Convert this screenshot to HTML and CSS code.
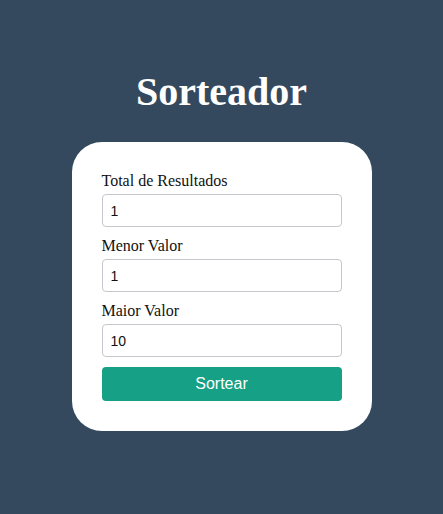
FILE: index.html
```html
<!DOCTYPE html>
<html lang="pt">
<head>
<meta charset="utf-8">
<title>Sorteador</title>
<link rel="stylesheet" href="styles.css">
</head>
<body>
<main class="page">
  <h1 class="title">Sorteador</h1>
  <form class="card">
    <label class="label" for="total">Total de Resultados</label>
    <input class="field" id="total" type="number" value="1">
    <label class="label" for="min">Menor Valor</label>
    <input class="field" id="min" type="number" value="1">
    <label class="label" for="max">Maior Valor</label>
    <input class="field" id="max" type="number" value="10">
    <button class="btn" type="button">Sortear</button>
  </form>
</main>
</body>
</html>
```
FILE: styles.css
```css
html, body {
  margin: 0;
  height: 100%;
}
body {
  background: #34495e;
  font-family: "Liberation Serif", "Times New Roman", serif;
}
.page {
  display: flex;
  flex-direction: column;
  align-items: center;
  padding-top: 69px;
}
.title {
  margin: 0 0 28px;
  font-size: 40px;
  font-weight: bold;
  color: #fff;
  line-height: 45px;
}
.card {
  box-sizing: border-box;
  width: 300px;
  background: #fff;
  border-radius: 30px;
  padding: 30px 30px 30px;
  display: flex;
  flex-direction: column;
}
.label {
  display: block;
  font-size: 16px;
  line-height: 18px;
  color: #111;
  margin-bottom: 4px;
}
.field {
  box-sizing: border-box;
  width: 100%;
  height: 33px;
  margin: 0 0 10px;
  padding: 0 8px;
  border: 1px solid #c4c8cc;
  border-radius: 4px;
  font-family: "Liberation Sans", Arial, sans-serif;
  font-size: 14px;
  color: #111;
  -moz-appearance: textfield;
}
.field::-webkit-inner-spin-button,
.field::-webkit-outer-spin-button {
  -webkit-appearance: none;
  margin: 0;
}
.btn {
  box-sizing: border-box;
  width: 100%;
  height: 34px;
  border: none;
  border-radius: 4px;
  background: #16a085;
  color: #fff;
  font-family: "Liberation Sans", Arial, sans-serif;
  font-size: 16px;
  cursor: pointer;
}
```
